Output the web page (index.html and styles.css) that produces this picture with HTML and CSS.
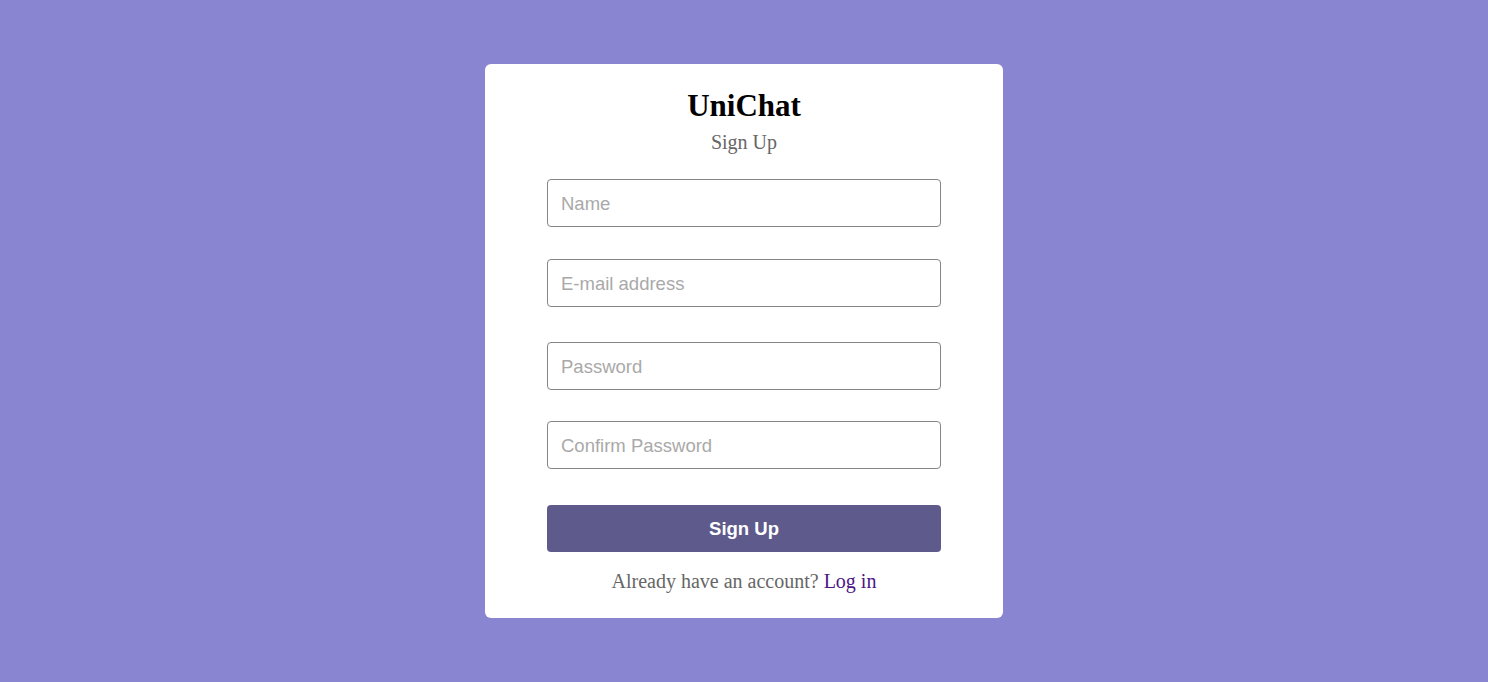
FILE: index.html
```html
<!DOCTYPE html>
<html lang="en">
<head>
<meta charset="utf-8">
<title>UniChat - Sign Up</title>
<link rel="stylesheet" href="styles.css">
</head>
<body>
<main class="page">
  <form class="card">
    <h1 class="brand">UniChat</h1>
    <p class="subtitle">Sign Up</p>
    <div class="field field-1"><input class="input" type="text" placeholder="Name"></div>
    <div class="field field-2"><input class="input" type="email" placeholder="E-mail address"></div>
    <div class="field field-3"><input class="input" type="password" placeholder="Password"></div>
    <div class="field field-4"><input class="input" type="password" placeholder="Confirm Password"></div>
    <button class="submit" type="button">Sign Up</button>
    <p class="footer">Already have an account? <a class="link" href="#">Log in</a></p>
  </form>
</main>
</body>
</html>
```
FILE: styles.css
```css
html, body {
  margin: 0;
  padding: 0;
  height: 100%;
}
body {
  background: #8985d1;
  font-family: "Liberation Serif", "Times New Roman", serif;
}
.page {
  display: flex;
  justify-content: center;
  align-items: flex-start;
  padding-top: 64px;
}
.card {
  box-sizing: border-box;
  width: 518px;
  background: #ffffff;
  border-radius: 6px;
  padding: 24px 62px 26px;
  display: flex;
  flex-direction: column;
  align-items: stretch;
}
.brand {
  margin: 0;
  font-size: 31px;
  font-weight: bold;
  text-align: center;
  color: #000;
  line-height: 36px;
}
.subtitle {
  margin: 7px 0 0;
  font-size: 20px;
  line-height: 22px;
  text-align: center;
  color: #666666;
}
.field {
  display: flex;
}
.field-1 { margin-top: 26px; }
.field-2 { margin-top: 32px; }
.field-3 { margin-top: 35px; }
.field-4 { margin-top: 31px; }
.input {
  box-sizing: border-box;
  width: 100%;
  height: 48px;
  border: 1px solid #858585;
  border-radius: 4px;
  padding: 2px 13px 0;
  font-family: "Liberation Sans", Arial, sans-serif;
  font-size: 18.5px;
  color: #333;
  background: #fff;
  outline: none;
}
.input::placeholder {
  color: #a9a9a9;
}
.submit {
  margin-top: 36px;
  height: 47px;
  border: none;
  border-radius: 4px;
  background: #5e5a8c;
  color: #ffffff;
  font-family: "Liberation Sans", Arial, sans-serif;
  font-size: 18.5px;
  font-weight: bold;
  cursor: pointer;
}
.footer {
  margin: 18px 0 0;
  font-size: 20px;
  line-height: 22px;
  text-align: center;
  color: #666666;
}
.link {
  color: #4b1585;
  text-decoration: none;
}
```
